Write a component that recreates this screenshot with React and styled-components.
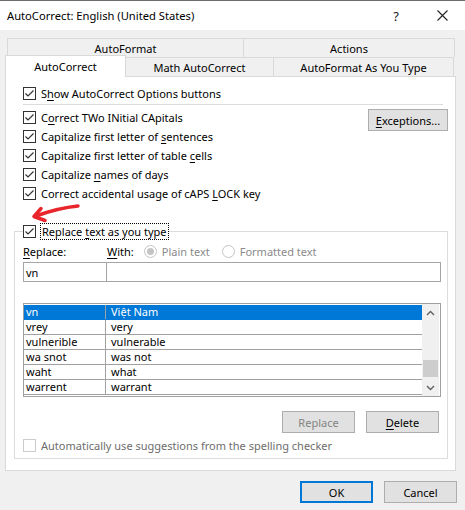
import React from 'react';
import styled, { createGlobalStyle, css } from 'styled-components';

const GlobalStyle = createGlobalStyle`
  html, body {
    margin: 0;
    padding: 0;
    background: #f0f0f0;
  }
  * {
    box-sizing: border-box;
  }
  body {
    font-family: 'Noto Sans', 'Open Sans', sans-serif;
    font-size: 11px;
    color: #000;
  }
`;

const Window = styled.div`
  position: relative;
  width: 465px;
  height: 510px;
  background: #f0f0f0;
  display: flex;
  flex-direction: column;
  overflow: hidden;
`;

const TitleBar = styled.div`
  height: 30px;
  flex: none;
  background: #fff;
  border-top: 1px solid #6d6d6d;
  display: flex;
  align-items: center;
  padding-left: 7px;
  font-size: 11.2px;
`;

const TitleText = styled.div`
  flex: 1;
`;

const TitleButton = styled.div`
  width: 46px;
  height: 29px;
  display: flex;
  align-items: center;
  justify-content: center;
  color: #222;
  font-size: 13px;
`;

const Body = styled.div`
  padding: 8px 9px 0 5px;
  display: flex;
  flex-direction: column;
`;

const TabRow = styled.div`
  display: flex;
  height: 19px;
  padding-left: 2px;
`;

const Tab = styled.div`
  ${({ $w, $selected }) => css`
    width: ${$w}px;
    flex: none;
    height: 19px;
    margin-left: -1px;
    border: 1px solid #d9d9d9;
    border-bottom: none;
    background: #f0f0f0;
    display: flex;
    align-items: center;
    justify-content: center;
    white-space: nowrap;
    &:first-child {
      margin-left: 0;
    }
    ${$selected &&
    css`
      position: relative;
      z-index: 2;
      background: #fff;
      height: 22px;
      margin: -2px 0 -1px -2px;
      &:first-child {
        margin-left: -2px;
      }
    `}
  `}
`;

const Panel = styled.div`
  background: #fff;
  border: 1px solid #d9d9d9;
  height: 395px;
  padding: 7px 7px 9px 8px;
  display: flex;
  flex-direction: column;
`;

const TopSection = styled.div`
  padding: 0 0 0 9px;
`;

const Separator = styled.div`
  height: 1px;
  background: #dcdcdc;
  margin: 1px 5px 3px 0;
`;

const OptionsRow = styled.div`
  display: flex;
  justify-content: space-between;
  align-items: flex-start;
`;

const CheckRow = styled.label`
  ${({ $disabled }) => css`
    display: flex;
    align-items: center;
    height: 19px;
    gap: 5px;
    white-space: nowrap;
    color: ${$disabled ? '#6d6d6d' : '#000'};
  `}
`;

const Box = styled.span`
  ${({ $disabled }) => css`
    width: 13px;
    height: 13px;
    flex: none;
    border: 1px solid ${$disabled ? '#cccccc' : '#333'};
    background: #fff;
    display: flex;
    align-items: center;
    justify-content: center;
  `}
`;

const Focus = styled.span`
  outline: 1px dotted #000;
  outline-offset: 0;
  padding: 0 1px;
  line-height: 15px;
`;

const Button = styled.button`
  ${({ $w, $primary, $disabled }) => css`
    width: ${$w || 73}px;
    height: 22px;
    background: #e1e1e1;
    border: ${$primary ? '2px solid #0078d7' : '1px solid #adadad'};
    font-family: inherit;
    font-size: 11px;
    color: ${$disabled ? '#838383' : '#000'};
    padding: 0;
    cursor: default;
  `}
`;

const ExceptionsButton = styled(Button)`
  margin-top: 1px;
`;

const Group = styled.fieldset`
  margin: 19px 0 0;
  border: 1px solid #dcdcdc;
  padding: 1px 6px 3px 8px;
  min-width: 0;
  display: flex;
  flex-direction: column;
`;

const Legend = styled.legend`
  padding: 0;
`;

const LabelRow = styled.div`
  display: flex;
  align-items: center;
  height: 19px;
`;

const FieldLabel = styled.span`
  width: 84px;
  flex: none;
`;

const RadioOption = styled.span`
  display: flex;
  align-items: center;
  gap: 5px;
  color: #8a8a8a;
  margin-left: ${({ $ml }) => $ml}px;
`;

const Radio = styled.span`
  width: 13px;
  height: 13px;
  border-radius: 50%;
  border: 1px solid #c4c4c4;
  background: #fff;
  display: flex;
  align-items: center;
  justify-content: center;
  &::after {
    content: '';
    width: 7px;
    height: 7px;
    border-radius: 50%;
    background: ${({ $on }) => ($on ? '#c4c4c4' : 'transparent')};
  }
`;

const InputRow = styled.div`
  display: flex;
  margin-top: 1px;
  height: 20px;
`;

const Input = styled.div`
  ${({ $w }) => css`
    height: 20px;
    border: 1px solid #a5a5a5;
    background: #fff;
    padding-left: 2px;
    display: flex;
    align-items: center;
    ${$w ? `width: ${$w}px; flex: none;` : 'flex: 1; margin-left: -1px;'}
  `}
`;

const List = styled.div`
  margin-top: 21px;
  height: 94px;
  border: 1px solid #a0a0a0;
  display: flex;
  padding: 1px 1px 0 0;
  background: #fff;
`;

const Rows = styled.div`
  flex: 1;
`;

const Row = styled.div`
  ${({ $selected }) => css`
    display: flex;
    height: 15px;
    line-height: 14px;
    border-bottom: 1px solid ${$selected ? '#0078d7' : '#a0a0a0'};
    background: ${$selected ? '#0078d7' : '#fff'};
    color: ${$selected ? '#fff' : '#000'};
  `}
`;

const Cell = styled.div`
  ${({ $w }) => css`
    padding-left: 2px;
    white-space: nowrap;
    ${$w ? `width: ${$w}px; flex: none; border-right: 1px solid #a0a0a0;` : 'flex: 1; padding-left: 5px;'}
  `}
`;

const Scrollbar = styled.div`
  width: 17px;
  background: #f0f0f0;
  display: flex;
  flex-direction: column;
  margin-top: -1px;
`;

const ScrollArrow = styled.div`
  height: 17px;
  display: flex;
  align-items: center;
  justify-content: center;
`;

const Track = styled.div`
  flex: 1;
  display: flex;
  flex-direction: column;
  justify-content: flex-end;
  padding: 0 1px 2px;
`;

const Thumb = styled.div`
  height: 17px;
  background: #cdcdcd;
`;

const ButtonRow = styled.div`
  ${({ $gap, $mt, $mr }) => css`
    display: flex;
    justify-content: flex-end;
    gap: ${$gap}px;
    margin-top: ${$mt}px;
    margin-right: ${$mr}px;
  `}
`;

const SpellRow = styled(CheckRow)`
  margin-top: 3px;
`;

const U = styled.span`
  text-decoration: underline;
  text-underline-offset: 2px;
`;

const Annotation = styled.svg`
  position: absolute;
  left: 0;
  top: 0;
  pointer-events: none;
`;

const Check = ({ checked = true, disabled }) => (
  <Box $disabled={disabled}>
    {checked && (
      <svg width="11" height="11" viewBox="0 0 11 11">
        <polyline points="1.5,5.5 4,8 9.5,2.5" fill="none" stroke="#333" strokeWidth="1.2" />
      </svg>
    )}
  </Box>
);

const Chevron = ({ up }) => (
  <svg width="9" height="6" viewBox="0 0 9 6">
    <polyline
      points={up ? '1,5 4.5,1.5 8,5' : '1,1 4.5,4.5 8,1'}
      fill="none"
      stroke="#606060"
      strokeWidth="1.4"
    />
  </svg>
);

const entries = [
  ['vn', 'Việt Nam'],
  ['vrey', 'very'],
  ['vulnerible', 'vulnerable'],
  ['wa snot', 'was not'],
  ['waht', 'what'],
  ['warrent', 'warrant'],
];

export default function App() {
  return (
    <>
      <GlobalStyle />
      <Window>
        <TitleBar>
          <TitleText>AutoCorrect: English (United States)</TitleText>
          <TitleButton>?</TitleButton>
          <TitleButton>
            <svg width="11" height="11" viewBox="0 0 11 11">
              <path d="M0.5 0.5 L10.5 10.5 M10.5 0.5 L0.5 10.5" stroke="#222" strokeWidth="1.1" />
            </svg>
          </TitleButton>
        </TitleBar>

        <Body>
          <TabRow>
            <Tab $w={237}>AutoFormat</Tab>
            <Tab $w={212}>Actions</Tab>
          </TabRow>
          <TabRow>
            <Tab $w={121} $selected>AutoCorrect</Tab>
            <Tab $w={149}>Math AutoCorrect</Tab>
            <Tab $w={181}>AutoFormat As You Type</Tab>
          </TabRow>

          <Panel>
            <TopSection>
              <CheckRow>
                <Check />
                <span>S<U>h</U>ow AutoCorrect Options buttons</span>
              </CheckRow>
              <Separator />
              <OptionsRow>
                <div>
                  <CheckRow>
                    <Check />
                    <span>C<U>o</U>rrect TWo INitial CApitals</span>
                  </CheckRow>
                  <CheckRow>
                    <Check />
                    <span>Capitalize first letter of <U>s</U>entences</span>
                  </CheckRow>
                  <CheckRow>
                    <Check />
                    <span>Capitalize first letter of table <U>c</U>ells</span>
                  </CheckRow>
                  <CheckRow>
                    <Check />
                    <span>Capitalize <U>n</U>ames of days</span>
                  </CheckRow>
                  <CheckRow>
                    <Check />
                    <span>Correct accidental usage of cAPS <U>L</U>OCK key</span>
                  </CheckRow>
                </div>
                <ExceptionsButton $w={80}>
                  <U>E</U>xceptions...
                </ExceptionsButton>
              </OptionsRow>
            </TopSection>

            <Group>
              <Legend>
                <CheckRow>
                  <Check />
                  <Focus>Replace <U>t</U>ext as you type</Focus>
                </CheckRow>
              </Legend>
              <LabelRow>
                <FieldLabel><U>R</U>eplace:</FieldLabel>
                <span><U>W</U>ith:</span>
                <RadioOption $ml={10}>
                  <Radio $on />
                  Plain text
                </RadioOption>
                <RadioOption $ml={12}>
                  <Radio />
                  Formatted text
                </RadioOption>
              </LabelRow>
              <InputRow>
                <Input $w={84}>vn</Input>
                <Input />
              </InputRow>

              <List>
                <Rows>
                  {entries.map(([from, to], i) => (
                    <Row key={from} $selected={i === 0}>
                      <Cell $w={82}>{from}</Cell>
                      <Cell>{to}</Cell>
                    </Row>
                  ))}
                </Rows>
                <Scrollbar>
                  <ScrollArrow><Chevron up /></ScrollArrow>
                  <Track><Thumb /></Track>
                  <ScrollArrow><Chevron /></ScrollArrow>
                </Scrollbar>
              </List>

              <ButtonRow $gap={11} $mt={14} $mr={2}>
                <Button $disabled>Replace</Button>
                <Button><U>D</U>elete</Button>
              </ButtonRow>

              <SpellRow $disabled>
                <Check checked={false} disabled />
                <span>Automatically use suggestions from the spelling checker</span>
              </SpellRow>
            </Group>
          </Panel>

          <ButtonRow $gap={11} $mt={10} $mr={-1}>
            <Button $primary>OK</Button>
            <Button>Cancel</Button>
          </ButtonRow>
        </Body>

        <Annotation width="465" height="510" viewBox="0 0 465 510">
          <path d="M78 206 Q58 208 36 216" fill="none" stroke="#e8262b" strokeWidth="3.5" strokeLinecap="round" />
          <path d="M41 208.5 L34 216.5 L45 220.5" fill="none" stroke="#e8262b" strokeWidth="3.5" strokeLinecap="round" strokeLinejoin="round" />
        </Annotation>
      </Window>
    </>
  );
}
